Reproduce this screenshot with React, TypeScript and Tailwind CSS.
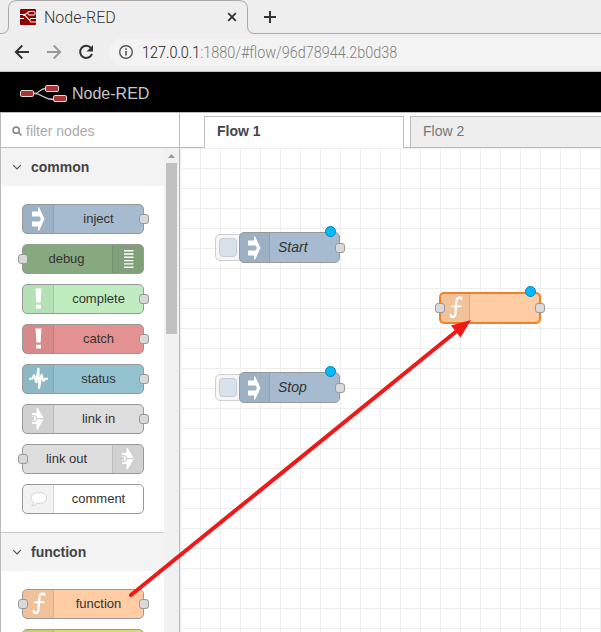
import type { ReactNode } from 'react';
import clsx from 'clsx';

type IconName = 'inject' | 'debug' | 'alert' | 'status' | 'link' | 'comment' | 'function';

interface PaletteItem {
  label: string;
  icon: IconName;
  color: string;
  /** Side the icon sits on */
  align?: 'left' | 'right';
  input?: boolean;
  output?: boolean;
}

interface FlowNodeProps {
  label?: string;
  icon: IconName;
  className: string;
  color: string;
  selected?: boolean;
  hasButton?: boolean;
  hasInput?: boolean;
}

const commonNodes: PaletteItem[] = [
  { label: 'inject', icon: 'inject', color: 'bg-[#a6bbcf]', output: true },
  { label: 'debug', icon: 'debug', color: 'bg-[#87a980]', align: 'right', input: true },
  { label: 'complete', icon: 'alert', color: 'bg-[#c0edc0]', output: true },
  { label: 'catch', icon: 'alert', color: 'bg-[#e49191]', output: true },
  { label: 'status', icon: 'status', color: 'bg-[#94c1d0]', output: true },
  { label: 'link in', icon: 'link', color: 'bg-[#dddddd]', output: true },
  { label: 'link out', icon: 'link', color: 'bg-[#dddddd]', align: 'right', input: true },
  { label: 'comment', icon: 'comment', color: 'bg-white' },
];

const functionNodes: PaletteItem[] = [
  { label: 'function', icon: 'function', color: 'bg-[#fecda3]', input: true, output: true },
  { label: '', icon: 'function', color: 'bg-[#d9d970]', input: true, output: true },
];

function NodeIcon({ name }: { name: IconName }) {
  const icons: Record<IconName, ReactNode> = {
    inject: (
      <path fill="#fff" d="M9 7.500h6V3.500h1.200L21.500 15 16.200 26.500H15v-4H9v-5h7.500L18 15l-1.500-2.500H9z" />
    ),
    debug: (
      <path stroke="#fff" strokeWidth="1.400" d="M11 6.700h9.500M11 10h9.500M11 13.300h9.500M11 16.600h9.500M11 19.900h9.500M11 23.200h9.500" />
    ),
    alert: (
      <path fill="#fff" d="M12.500 4.500h6l-.9 14h-4.200zM13 20.800h5v3.700h-5z" />
    ),
    status: (
      <path
        fill="none"
        stroke="#fff"
        strokeWidth="2"
        strokeLinejoin="bevel"
        d="M6 14.800h3.200l2-4 2 8 2.300-15 .5 21 2.500-14.500 2 7 1.700-2.500h2.800"
      />
    ),
    link: (
      <>
        <path fill="#fff" d="M13.500 4h1.300L20.800 14.500 14.800 25.500h-1.300V20H9v-3.500h2v-4H9V9h4.500z" />
        <path
          fill="none"
          stroke="#cfcfcf"
          strokeWidth="1.200"
          d="M9 11.500h1.300a3.200 3 0 0 1 0 6.200H9M13.500 14.700h7"
        />
      </>
    ),
    comment: (
      <path
        fill="#fff"
        stroke="#c9c9c9"
        strokeWidth=".8"
        d="M16 8.500c4.500 0 7.500 2.500 7.500 5.500s-3 5.500-7.500 5.500c-.8 0-1.600-.1-2.300-.3-1 1.500-2.500 2.600-5 2.500 1.200-.8 1.800-2 1.900-3.500C9 17.100 8 15.700 8 14 8 11 11.500 8.500 16 8.500z"
      />
    ),
    function: (
      <>
        <path
          fill="none"
          stroke="#fff"
          strokeWidth="2.300"
          strokeLinecap="round"
          d="M21 5c-2.800-1.300-4.400.4-4.600 3.300l-.9 12.200c-.2 3.300-2 4.400-4.500 2.700"
        />
        <path stroke="#fff" strokeWidth="1.800" d="M11.300 13.300h10" />
        <path fill="#fff" d="M19.800 3.800h2.400v3.400h-1.600zM9.800 20.800h1.600l1.200 3.500H9.800z" />
      </>
    ),
  };

  return (
    <svg viewBox="0 0 31 30" className="h-[30px] w-[31px] shrink-0">
      {icons[name]}
    </svg>
  );
}

function Port({ className }: { className?: string }) {
  return (
    <span
      className={clsx(
        'absolute top-1/2 h-[10px] w-[10px] -translate-y-1/2 rounded-[3px] border border-[#999] bg-[#d9d9d9]',
        className
      )}
    />
  );
}

function PaletteNode({ label, icon, color, align = 'left', input, output }: PaletteItem) {
  const right = align === 'right';

  return (
    <div
      className={clsx(
        'relative flex h-[30px] w-[122px] shrink-0 rounded-[5px] border border-[#999]',
        right && 'flex-row-reverse',
        color
      )}
    >
      <div
        className={clsx(
          'flex w-[31px] shrink-0 items-center justify-center border-black/10 bg-black/5',
          right ? 'rounded-r-[4px] border-l' : 'rounded-l-[4px] border-r'
        )}
      >
        <NodeIcon name={icon} />
      </div>
      <span
        className={clsx('flex-1 text-center text-[13px] leading-[28px] text-[#333]', right && 'pr-[2px]')}
      >
        {label}
      </span>
      {input && <Port className="-left-[5px]" />}
      {output && <Port className="-right-[6px]" />}
    </div>
  );
}

function Category({ title, nodes }: { title: string; nodes: PaletteItem[] }) {
  return (
    <section className="shrink-0 border-b border-[#ccc]">
      <h3 className="flex h-[38px] items-center bg-[#f3f3f3] pl-[11px] text-sm font-bold text-[#444]">
        <svg viewBox="0 0 10 10" className="mr-[9px] h-[10px] w-[10px]">
          <path d="M1.200 3.200 5 7l3.800-3.800" fill="none" stroke="#555" strokeWidth="1.200" />
        </svg>
        {title}
      </h3>
      <div className="flex flex-col gap-[10px] py-[18px] pl-[21px]">
        {nodes.map((node) => (
          <PaletteNode key={node.label} {...node} />
        ))}
      </div>
    </section>
  );
}

function FlowNode({ label, icon, className, color, selected, hasButton, hasInput }: FlowNodeProps) {
  return (
    <div className={clsx('absolute', className)}>
      {hasButton && (
        <div className="absolute top-[2px] -left-[24px] h-[27px] w-[32px] rounded-[5px] border border-[#d0d0d0] bg-[#f4f4f4]/80 p-[3px]">
          <div className="h-[19px] w-[18px] rounded-[4px] border border-[#c5ced6] bg-[#d9e2ea]" />
        </div>
      )}
      <div
        className={clsx(
          'relative flex h-full w-full overflow-hidden rounded-[5px]',
          selected ? 'border-2 border-[#f08125]' : 'border border-[#999]',
          color
        )}
      >
        <div
          className={clsx(
            'flex shrink-0 items-center justify-center border-r border-black/10 bg-black/5',
            selected ? 'w-[29px]' : 'w-[30px]'
          )}
        >
          <NodeIcon name={icon} />
        </div>
        <span className="pl-[8px] text-sm leading-[28px] text-[#333] italic">{label}</span>
      </div>
      {hasInput && <Port className="-left-[4px]" />}
      <Port className={selected ? '-right-[4px]' : '-right-[5px]'} />
      <span
        className={clsx(
          'absolute h-[11px] w-[11px] rounded-full border border-[#0d7fb0] bg-[#00bcff]',
          selected ? '-top-[6px] right-[5.500px]' : '-top-[6.500px] right-[4.500px]'
        )}
      />
    </div>
  );
}

function BrowserChrome() {
  return (
    <div className="relative h-[72px] shrink-0 border-b border-[#c4c4c4] bg-[#eee] font-[Roboto]">
      <svg viewBox="0 0 601 36" className="absolute inset-x-0 top-0 h-9 w-full" fill="none">
        <path
          d="M0 33.500h1q7.500 0 7.500-7.500V9Q8.500.5 17 .5h222q8.500 0 8.500 8.500v17q0 7.500 7.500 7.500h346"
          stroke="#aca7a8"
        />
      </svg>
      <div className="relative flex h-[34px] items-center pl-5">
        <svg viewBox="0 0 16 16" className="h-4 w-4">
          <rect width="16" height="16" rx="1" fill="#8f0000" />
          <path
            d="M0 5.500h4c3 0 3-2.500 5-2.500M3 6c5 0 4 5.500 8 5.500M0 9.500h4"
            fill="none"
            stroke="#fff"
            strokeWidth="1.200"
          />
          <rect x="8" y="2.500" width="7" height="3.500" rx="1" fill="#8f0000" stroke="#fff" />
          <rect x="10" y="9.500" width="7" height="3.500" rx="1" fill="#8f0000" stroke="#fff" />
        </svg>
        <span className="ml-2 w-[182px] pt-px text-base font-light text-[#333]">Node-RED</span>
        <svg viewBox="0 0 12 12" className="h-3 w-3" stroke="#333" strokeWidth="1.800">
          <path d="m2.200 2.200 7.600 7.600m0-7.600L2.200 9.800" />
        </svg>
        <svg viewBox="0 0 12 12" className="ml-[26px] h-3 w-3" stroke="#333" strokeWidth="2">
          <path d="M6 0v12M0 6h12" />
        </svg>
      </div>
      <div className="mt-1 flex h-7 items-center pl-[14px]">
        <svg viewBox="0 0 16 16" className="h-4 w-4" fill="none" stroke="#333" strokeWidth="1.900">
          <path d="M15 8H2M8.300 1.500 1.800 8l6.500 6.500" />
        </svg>
        <svg viewBox="0 0 16 16" className="ml-4 h-4 w-4" fill="none" stroke="#999" strokeWidth="1.900">
          <path d="M1 8h13M7.700 1.500 14.200 8l-6.500 6.500" />
        </svg>
        <svg viewBox="0 0 16 16" className="ml-4 h-4 w-4" fill="none">
          <path d="M13 4a6.100 6.100 0 1 0 1 5.800" stroke="#333" strokeWidth="2" />
          <path d="M15 1v6.500H8.500z" fill="#333" />
        </svg>
        <div className="ml-[15px] flex h-7 flex-1 items-center rounded-l-full bg-[#f3f3f3] pl-[9px]">
          <svg viewBox="0 0 16 16" className="h-4 w-4" fill="none" stroke="#555">
            <circle cx="8" cy="8" r="6.300" strokeWidth="1.400" />
            <path d="M8 7v4.500M8 4.200v1.600" strokeWidth="1.600" />
          </svg>
          <span className="ml-2 origin-left scale-x-90 pt-px text-base font-light text-[#808080]">
            <span className="text-[#222]">127.0.0.1</span>:1880/#flow/96d78944.2b0d38
          </span>
        </div>
      </div>
    </div>
  );
}

function Header() {
  return (
    <header className="flex h-10 shrink-0 items-center bg-black pl-5">
      <svg viewBox="0 0 48 20" className="h-5 w-12" fill="none">
        <g stroke="#ccc" strokeWidth="1.300">
          <path d="M13 11.500h1c6 0 5-5 12-5M13 11.500h2c7 0 8 6 19 6" />
        </g>
        <g fill="#a33" stroke="#ddd">
          <rect x=".5" y="8.500" width="13" height="6" rx="1.500" />
          <rect x="25.500" y="3.500" width="13" height="6" rx="1.500" />
          <rect x="33.500" y="13.500" width="13" height="6" rx="1.500" />
        </g>
      </svg>
      <span className="ml-1 pt-[3px] text-base leading-5 text-[#c7c7c7]">Node-RED</span>
    </header>
  );
}

function Palette() {
  return (
    <aside className="flex w-[180px] shrink-0 flex-col border-x border-[#bbb]">
      <div className="flex h-[35px] shrink-0 items-center border-b border-[#bbb] pt-[2px] pl-[11px] text-sm text-[#aaa]">
        <svg viewBox="0 0 12 12" className="mr-[4px] h-[10px] w-[10px]" fill="none" stroke="#888" strokeWidth="1.900">
          <circle cx="5" cy="5" r="3.700" />
          <path d="m7.800 7.800 3.500 3.500" />
        </svg>
        filter nodes
      </div>
      <div className="flex min-h-0 flex-1">
        <div className="flex w-[163px] shrink-0 flex-col overflow-hidden">
          <Category title="common" nodes={commonNodes} />
          <Category title="function" nodes={functionNodes} />
        </div>
        <div className="flex flex-1 flex-col items-center bg-[#f1f1f1]">
          <svg viewBox="0 0 15 15" className="h-[15px] w-[15px]">
            <path d="M4 10h7L7.500 6z" fill="#999" />
          </svg>
          <div className="h-[171px] w-[11px] bg-[#c1c1c1]" />
        </div>
      </div>
    </aside>
  );
}

function Workspace() {
  return (
    <main className="flex min-w-0 flex-1 flex-col">
      <div className="flex h-[35px] shrink-0 text-sm">
        <div className="w-6 border-b border-[#bbb]" />
        <div className="mt-[3px] w-[200px] shrink-0 border-x border-t border-[#bbb] bg-white pl-3 leading-[29px] font-bold text-[#444]">
          Flow 1
        </div>
        <div className="w-[6px] border-b border-[#bbb]" />
        <div className="mt-[3px] flex-1 border-y border-l border-[#bbb] bg-[#eee] pl-3 leading-[29px] text-[#777]">
          Flow 2
        </div>
      </div>
      <div className="relative flex-1 bg-[linear-gradient(to_right,#eee_1px,transparent_1px),linear-gradient(to_bottom,#eee_1px,transparent_1px)] bg-[size:20px_20px]">
        <FlowNode
          label="Start"
          icon="inject"
          color="bg-[#a6bbcf]"
          className="top-[84px] left-[59px] h-[31px] w-[101px]"
          hasButton
        />
        <FlowNode
          label="Stop"
          icon="inject"
          color="bg-[#a6bbcf]"
          className="top-[224px] left-[59px] h-[31px] w-[101px]"
          hasButton
        />
        <FlowNode
          icon="function"
          color="bg-[#fecda3]"
          className="top-[144px] left-[259px] h-[32px] w-[102px]"
          selected
          hasInput
        />
      </div>
    </main>
  );
}

export default function App() {
  return (
    <div className="relative flex h-[632px] w-[601px] flex-col overflow-hidden bg-white font-['Liberation_Sans',Arial,sans-serif]">
      <BrowserChrome />
      <Header />
      <div className="flex min-h-0 flex-1 border-t border-[#bbb]">
        <Palette />
        <Workspace />
      </div>
      {/* Drag arrow from the palette to the canvas */}
      <svg viewBox="0 0 601 632" className="pointer-events-none absolute inset-0 h-[632px] w-[601px]">
        <path d="M131 595 458 330" stroke="#f01818" strokeWidth="4" strokeLinecap="round" />
        <path d="m471 320-20 5.500 9.500 12z" fill="#f01818" />
      </svg>
    </div>
  );
}
